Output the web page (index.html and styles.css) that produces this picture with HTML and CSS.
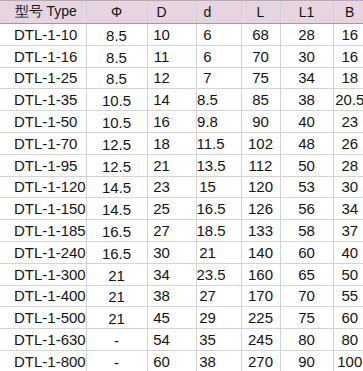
FILE: index.html
```html
<!DOCTYPE html>
<html>
<head>
<meta charset="utf-8">
<link rel="stylesheet" href="styles.css">
</head>
<body>
<table class="spec">
<colgroup>
<col class="c-type"><col class="c-phi"><col class="c-dd"><col class="c-d"><col class="c-l"><col class="c-l1"><col class="c-b">
</colgroup>
<thead>
<tr><th class="head-type">型号 Type</th><th>Φ</th><th class="big-d">D</th><th class="small-d">d</th><th>L</th><th>L1</th><th>B</th></tr>
</thead>
<tbody>
<tr><td class="type">DTL-1-10</td><td class="phi">8.5</td><td class="big-d">10</td><td class="small-d">6</td><td>68</td><td>28</td><td>16</td></tr>
<tr><td class="type">DTL-1-16</td><td class="phi">8.5</td><td class="big-d">11</td><td class="small-d">6</td><td>70</td><td>30</td><td>16</td></tr>
<tr><td class="type">DTL-1-25</td><td class="phi">8.5</td><td class="big-d">12</td><td class="small-d">7</td><td>75</td><td>34</td><td>18</td></tr>
<tr><td class="type">DTL-1-35</td><td class="phi">10.5</td><td class="big-d">14</td><td class="small-d">8.5</td><td>85</td><td>38</td><td>20.5</td></tr>
<tr><td class="type">DTL-1-50</td><td class="phi">10.5</td><td class="big-d">16</td><td class="small-d">9.8</td><td>90</td><td>40</td><td>23</td></tr>
<tr><td class="type">DTL-1-70</td><td class="phi">12.5</td><td class="big-d">18</td><td class="small-d">11.5</td><td>102</td><td>48</td><td>26</td></tr>
<tr><td class="type">DTL-1-95</td><td class="phi">12.5</td><td class="big-d">21</td><td class="small-d">13.5</td><td>112</td><td>50</td><td>28</td></tr>
<tr><td class="type">DTL-1-120</td><td class="phi">14.5</td><td class="big-d">23</td><td class="small-d">15</td><td>120</td><td>53</td><td>30</td></tr>
<tr><td class="type">DTL-1-150</td><td class="phi">14.5</td><td class="big-d">25</td><td class="small-d">16.5</td><td>126</td><td>56</td><td>34</td></tr>
<tr><td class="type">DTL-1-185</td><td class="phi">16.5</td><td class="big-d">27</td><td class="small-d">18.5</td><td>133</td><td>58</td><td>37</td></tr>
<tr><td class="type">DTL-1-240</td><td class="phi">16.5</td><td class="big-d">30</td><td class="small-d">21</td><td>140</td><td>60</td><td>40</td></tr>
<tr><td class="type">DTL-1-300</td><td class="phi">21</td><td class="big-d">34</td><td class="small-d">23.5</td><td>160</td><td>65</td><td>50</td></tr>
<tr><td class="type">DTL-1-400</td><td class="phi">21</td><td class="big-d">38</td><td class="small-d">27</td><td>170</td><td>70</td><td>55</td></tr>
<tr><td class="type">DTL-1-500</td><td class="phi">21</td><td class="big-d">45</td><td class="small-d">29</td><td>225</td><td>75</td><td>60</td></tr>
<tr><td class="type">DTL-1-630</td><td class="phi">-</td><td class="big-d">54</td><td class="small-d">35</td><td>245</td><td>80</td><td>80</td></tr>
<tr><td class="type">DTL-1-800</td><td class="phi">-</td><td class="big-d">60</td><td class="small-d">38</td><td>270</td><td>90</td><td>100</td></tr>
</tbody>
</table>
</body>
</html>
```

FILE: styles.css
```css
html, body {
  margin: 0;
  padding: 0;
  background: #ffffff;
}
.spec {
  border-collapse: collapse;
  table-layout: fixed;
  width: 366px;
  font-family: "Liberation Sans", Arial, sans-serif;
  font-size: 15px;
  color: #141414;
}
.c-type { width: 86px; }
.c-phi { width: 61px; }
.c-dd { width: 49px; }
.c-d { width: 45px; }
.c-l { width: 39px; }
.c-l1 { width: 53px; }
.c-b { width: 33px; }
.spec th, .spec td {
  height: 21.8px;
  padding: 0;
  text-align: center;
  border-left: 1px solid #d4d4d4;
  border-bottom: 1px solid #d4d4d4;
  box-sizing: border-box;
  white-space: nowrap;
}
.spec th:first-child, .spec td:first-child {
  border-left: none;
}
.spec thead th {
  height: 23px;
  font-weight: normal;
  font-size: 14px;
  background: #e6d4e1;
  border-top: 1px solid #b9aab5;
  border-bottom: 1px solid #9e9e9e;
}
.spec .head-type {
  padding-left: 6px;
}
.spec .type {
  text-align: left;
  padding-left: 14px;
}
.spec .phi {
  padding-top: 2px;
}
.spec .big-d {
  padding-right: 20px;
}
.spec .small-d {
  padding-right: 22px;
}
```
